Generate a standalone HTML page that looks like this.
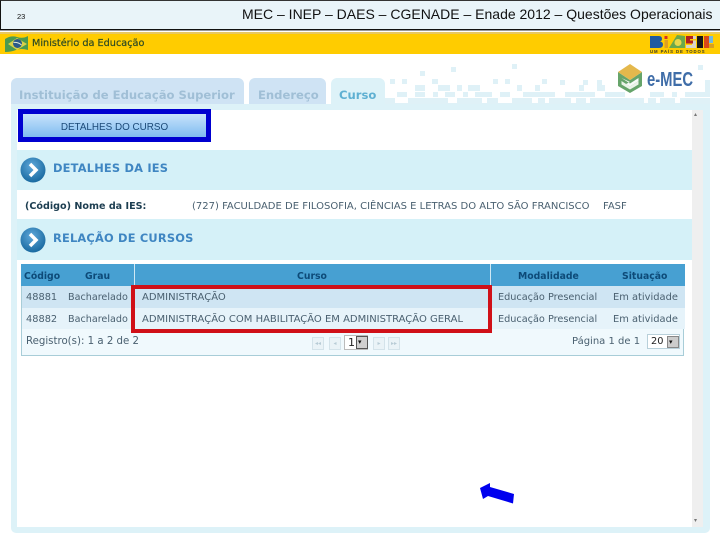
<!DOCTYPE html>
<html lang="pt"><head><meta charset="utf-8"><title>e-MEC</title>
<style>
html,body{margin:0;padding:0;background:#fff}
#p{position:relative;width:720px;height:540px;overflow:hidden;background:#fff;font-family:"DejaVu Sans","Liberation Sans",sans-serif}
#p div{position:absolute;box-sizing:border-box}
.t{white-space:nowrap;line-height:14px}
.h{font-family:"Liberation Sans",sans-serif}
.tab{border-radius:6px 6px 0 0;font-weight:bold;font-size:11.6px;line-height:14px;white-space:nowrap}
.c{font-size:9.8px;color:#4a6070}
.hd{font-size:9.3px;font-weight:bold;color:#0d4a78}
.sec{font-size:11.4px;font-weight:bold;color:#3f86c2;letter-spacing:.2px}
.pb{width:12px;height:13px;top:337px;background:#eaf3f7;border:1px solid #d4e3ea;color:#b8ccd6;font-size:6px;line-height:11px;text-align:center;white-space:nowrap}
</style></head><body><div id="p">

<div style="left:0;top:0;width:720px;height:30px;background:#e9f4f9;border-left:1.5px solid #111;border-top:1px solid #333;border-bottom:1.5px solid #111"></div>
<div style="left:0;top:30px;width:720px;height:1px;background:#999"></div>
<div class="t h" style="left:17px;top:10px;font-size:7.5px;color:#111">23</div>
<div class="t h" style="left:242px;top:6px;font-size:14px;color:#111;line-height:16px">MEC – INEP – DAES – CGENADE – Enade 2012 – Questões Operacionais</div>

<div style="left:0;top:32px;width:720px;height:22px;background:#ffcc00;border-top:2px solid #e8c860"></div>
<svg style="position:absolute;left:5px;top:35px" width="24" height="18" viewBox="0 0 24 18"><path d="M0 4 Q6 0 12 2 T23 1 L23 15 Q16 13 11 15 T0 17Z" fill="#4c9a50"/><path d="M3 9 L12 3 L22 9 L12 15Z" fill="#d8d048"/><circle cx="12.500" cy="8.500" r="4.500" fill="#2c5a88"/><path d="M8.500 7.500 Q13 7 16.500 10" stroke="#dfe8d8" stroke-width="1" fill="none"/></svg>
<div class="t" style="left:32px;top:37px;font-size:9.700px;color:#2c4a24;-webkit-text-stroke:.2px #2c4a24">Ministério da Educação</div>

<svg style="position:absolute;left:648px;top:33px" width="68" height="21" viewBox="0 0 68 21">
<path d="M2 3 H11 Q14 3 14 6 Q14 8 12 8.500 Q15 9 15 11.500 Q15 15 11 15 H2Z" fill="#1f5aa0"/>
<rect x="16.500" y="3" width="3" height="3" fill="#d83020"/><rect x="16.500" y="7" width="3.500" height="8" fill="#e0a020"/>
<path d="M21 15 L29 2 L37 3 L37 15Z" fill="#6aa84c"/><circle cx="30" cy="9.500" r="3.500" fill="#e8d84c"/>
<path d="M38 3 H48 V6 H42 V7.500 H48 V15 H38 V12 H44 V10.500 H38Z" fill="#d8d4c8"/><path d="M38 3 H45 V6 H42 V7.500 H45 V10.500 H38Z" fill="#b02020"/>
<rect x="49" y="3" width="6" height="12" fill="#181818"/>
<rect x="56" y="3" width="5" height="12" fill="#d84818"/><rect x="61" y="3" width="4" height="7" fill="#70b8e0"/><rect x="61" y="11" width="5" height="4" fill="#d8a020"/>
<text x="2" y="20" font-family="Liberation Sans" font-size="4.300" font-weight="bold" fill="#3c3c28" letter-spacing=".900">UM PAÍS DE TODOS</text>
</svg>

<svg style="position:absolute;left:0;top:0" width="720" height="110" viewBox="0 0 720 110" fill="#dff1f7">
<rect x="385" y="103" width="325" height="2"/>
<rect x="385" y="98" width="10" height="5"/><rect x="408" y="98" width="40" height="5"/><rect x="457" y="98" width="25" height="5"/><rect x="487" y="98" width="11" height="5"/><rect x="512" y="98" width="20" height="5"/><rect x="538" y="98" width="7" height="5"/><rect x="549" y="98" width="22" height="5"/><rect x="576" y="98" width="10" height="5"/><rect x="590" y="98" width="54" height="5"/><rect x="648" y="98" width="8" height="5"/><rect x="660" y="98" width="15" height="5"/><rect x="680" y="98" width="30" height="5"/>
<rect x="397" y="92" width="10" height="5"/><rect x="415" y="92" width="10" height="5"/><rect x="433" y="92" width="5" height="5"/><rect x="445" y="92" width="10" height="5"/><rect x="463" y="92" width="5" height="5"/><rect x="475" y="92" width="17" height="5"/><rect x="500" y="92" width="10" height="5"/><rect x="523" y="92" width="32" height="5"/><rect x="565" y="92" width="30" height="5"/><rect x="605" y="92" width="20" height="5"/><rect x="650" y="92" width="14" height="5"/><rect x="672" y="92" width="5" height="5"/><rect x="685" y="92" width="25" height="5"/>
<rect x="415" y="85" width="10" height="6"/><rect x="438" y="85" width="12" height="6"/><rect x="457" y="85" width="5" height="6"/><rect x="468" y="85" width="12" height="6"/><rect x="517" y="85" width="5" height="6"/><rect x="535" y="85" width="5" height="6"/><rect x="579" y="85" width="5" height="6"/><rect x="597" y="85" width="8" height="6"/><rect x="705" y="80" width="5" height="12"/>
<rect x="390" y="79" width="5" height="5"/><rect x="402" y="79" width="5" height="5"/><rect x="432" y="79" width="6" height="5"/><rect x="493" y="79" width="5" height="5"/><rect x="505" y="79" width="5" height="5"/><rect x="542" y="79" width="5" height="5"/><rect x="560" y="80" width="5" height="5"/><rect x="583" y="80" width="5" height="5"/><rect x="597" y="80" width="5" height="5"/>
<rect x="420" y="71" width="5" height="5"/><rect x="451" y="67" width="5" height="5"/><rect x="512" y="64" width="5" height="5"/><rect x="698" y="65" width="5" height="5"/>
</svg>

<svg style="position:absolute;left:616px;top:62px" width="30" height="33" viewBox="0 0 30 33">
<path d="M2 10 L14 18 L26 10 L26 24 L14 31 L2 24Z" fill="#66a46a"/>
<path d="M14 2 L26 10 L14 18 L2 10Z" fill="#e4b84c"/>
<path d="M5.500 16 L14 21.500 L22.500 16 L22.500 19 L14 24.500 L10 22 L14 20" fill="#fff" opacity=".95"/>
<path d="M5.500 19 L14 24.500 L22.500 19 L22.500 22.500 L14 27.500 L5.500 22.500Z" fill="#eaf3e8"/>
</svg>
<div class="t h" style="left:647px;top:69px;font-size:20px;font-weight:bold;color:#3f6da8;line-height:22px;transform:scaleX(.74);transform-origin:left">e-MEC</div>

<div style="left:11px;top:104px;width:699px;height:429px;background:#ddf2f8;border-radius:0 0 5px 5px"></div>
<div class="tab" style="left:11px;top:78px;width:233px;height:26px;background:#cfe3f4;padding:10px 0 0 8px;color:#a0bfd6">Instituição de Educação Superior</div>
<div class="tab" style="left:249px;top:78px;width:77px;height:26px;background:#cfe3f4;padding:10px 0 0 9px;color:#a0bfd6">Endereço</div>
<div class="tab" style="left:331px;top:78px;width:54px;height:26px;background:#ddf2f8;padding:10px 0 0 8px;color:#5fb0d2">Curso</div>

<div style="left:17px;top:110px;width:675px;height:417px;background:#fff"></div>
<div style="left:692px;top:110px;width:11px;height:417px;background:#efefef"></div>
<div class="t" style="left:694px;top:111px;font-size:6px;color:#777;line-height:8px">▴</div>
<div class="t" style="left:694px;top:517px;font-size:6px;color:#777;line-height:8px">▾</div>

<div style="left:18px;top:109px;width:193px;height:33px;background:linear-gradient(#c8e3fb,#7fbcf0);border:5px solid #0000d0"></div>
<div class="t h" style="left:18px;top:121px;width:193px;text-align:center;font-size:9.900px;color:#1c4a78">DETALHES DO CURSO</div>

<div style="left:17px;top:150px;width:675px;height:40px;background:#d5f1f8"></div>
<div style="left:17px;top:190px;width:675px;height:29px;background:#fff"></div>
<div style="left:17px;top:219px;width:675px;height:41px;background:#d5f1f8"></div>

<svg style="position:absolute;left:20px;top:157px" width="26" height="26" viewBox="0 0 26 26"><defs><radialGradient id="g" cx=".45" cy=".35" r=".7"><stop offset="0" stop-color="#5fa8da"/><stop offset="1" stop-color="#14659c"/></radialGradient></defs><circle cx="13" cy="13" r="12.500" fill="url(#g)"/><path d="M10 7 L16 13 L10 19" fill="none" stroke="#fff" stroke-width="3.500"/></svg>
<svg style="position:absolute;left:20px;top:227px" width="26" height="26" viewBox="0 0 26 26"><circle cx="13" cy="13" r="12.500" fill="url(#g)"/><path d="M10 7 L16 13 L10 19" fill="none" stroke="#fff" stroke-width="3.500"/></svg>
<div class="t sec" style="left:53px;top:161px">DETALHES DA IES</div>
<div class="t sec" style="left:53px;top:231px">RELAÇÃO DE CURSOS</div>

<div class="t" style="left:25px;top:200px;font-size:9.600px;font-weight:bold;color:#1c3d50">(Código) Nome da IES:</div>
<div class="t c" style="left:192px;top:200px;font-size:10px">(727) FACULDADE DE FILOSOFIA, CIÊNCIAS E LETRAS DO ALTO SÃO FRANCISCO</div>
<div class="t c" style="left:603px;top:200px;font-size:10px">FASF</div>

<div style="left:21px;top:264px;width:663px;height:92px;background:#f0f9fd;border:1px solid #a8cdd8;border-top:0"></div>
<div style="left:21px;top:264px;width:664px;height:22px;background:#47a0d2"></div>
<div style="left:134px;top:264px;width:1px;height:22px;background:#d0e8f4"></div>
<div style="left:490px;top:264px;width:1px;height:22px;background:#d0e8f4"></div>
<div style="left:22px;top:286px;width:663px;height:22px;background:#cfe5f3"></div>
<div style="left:22px;top:308px;width:663px;height:21px;background:#e6f3fa"></div>

<div class="t hd" style="left:24px;top:270px">Código</div>
<div class="t hd" style="left:85px;top:270px">Grau</div>
<div class="t hd" style="left:297px;top:270px">Curso</div>
<div class="t hd" style="left:518px;top:270px">Modalidade</div>
<div class="t hd" style="left:622px;top:270px">Situação</div>

<div class="t c" style="left:26px;top:291px">48881</div>
<div class="t c" style="left:68px;top:291px;font-size:9.600px">Bacharelado</div>
<div class="t c" style="left:142px;top:291px;font-size:10px">ADMINISTRAÇÃO</div>
<div class="t c" style="left:498px;top:291px;font-size:9.700px">Educação Presencial</div>
<div class="t c" style="left:613px;top:291px;font-size:9.900px">Em atividade</div>
<div class="t c" style="left:26px;top:313px">48882</div>
<div class="t c" style="left:68px;top:313px;font-size:9.600px">Bacharelado</div>
<div class="t c" style="left:142px;top:313px;font-size:10px">ADMINISTRAÇÃO COM HABILITAÇÃO EM ADMINISTRAÇÃO GERAL</div>
<div class="t c" style="left:498px;top:313px;font-size:9.700px">Educação Presencial</div>
<div class="t c" style="left:613px;top:313px;font-size:9.900px">Em atividade</div>

<div class="t c" style="left:26px;top:335px;font-size:10.200px">Registro(s): 1 a 2 de 2</div>
<div class="pb" style="left:312px">◂◂</div>
<div class="pb" style="left:329px">◂</div>
<div style="left:344px;top:335px;width:24px;height:15px;background:#fff;border:1px solid #bbb"></div>
<div class="t c" style="left:348px;top:336px;color:#222;font-size:11px">1</div>
<div style="left:356px;top:336px;width:12px;height:13px;background:#d0d0d0;border:1px solid #555"></div>
<div class="t" style="left:358px;top:336px;font-size:7px;color:#111;line-height:12px">▾</div>
<div class="pb" style="left:373px">▸</div>
<div class="pb" style="left:388px">▸▸</div>
<div class="t c" style="left:572px;top:335px;font-size:10px">Página 1 de 1</div>
<div style="left:647px;top:334px;width:33px;height:15px;background:#fff;border:1px solid #b8d0da"></div>
<div class="t c" style="left:651px;top:335px;color:#222">20</div>
<div style="left:667px;top:336px;width:12px;height:12px;background:#ccc;border:1px solid #888"></div>
<div class="t" style="left:669px;top:336px;font-size:7px;color:#111;line-height:12px">▾</div>

<div style="left:131px;top:285px;width:361px;height:48px;border:4px solid #d01018"></div>

<svg style="position:absolute;left:478px;top:481px" width="38" height="24" viewBox="0 0 38 24"><path d="M2 7 L12 2 L12 6 L36 13 L35 22.500 L10 15 L5 18Z" fill="#0000ee"/></svg>

</div></body></html>
